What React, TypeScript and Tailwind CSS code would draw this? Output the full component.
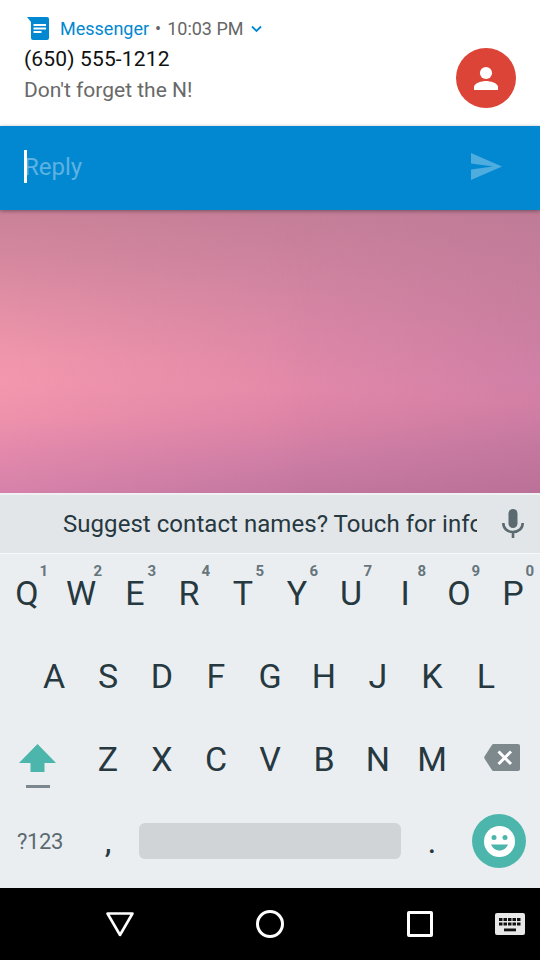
import React from "react";

const topRow = ["Q", "W", "E", "R", "T", "Y", "U", "I", "O", "P"];
const homeRow = ["A", "S", "D", "F", "G", "H", "J", "K", "L"];
const bottomRow = ["Z", "X", "C", "V", "B", "N", "M"];

function Key({ label, hint }: { label: string; hint?: string }) {
  return (
    <div className="relative flex h-[82px] w-[54px] shrink-0 items-center justify-center pb-[2px] text-[34px] leading-[40px] text-[#263840]">
      {label}
      {hint && (
        <span className="absolute top-[9px] right-[6px] text-[15px] leading-[18px] font-bold text-[#66757b]">
          {hint}
        </span>
      )}
    </div>
  );
}

function Notification() {
  return (
    <header className="flex h-[126px] justify-between bg-white pr-6 pl-6">
      <div className="flex flex-col pt-[15px]">
        <div className="flex h-[26px] items-center text-[18px] whitespace-nowrap">
          <svg className="ml-[3px] h-[23px] w-[22px]" viewBox="0 0 22 23">
            <path d="M0 0h20a2 2 0 0 1 2 2v19a2 2 0 0 1-2 2H6a2 2 0 0 1-2-2V5z" fill="#0288d1" />
            <path d="M6.500 8h12.500M6.500 11.500h12.500M6.500 15h8" stroke="#fff" strokeWidth="2" />
          </svg>
          <span className="ml-[11px] text-[#0288d1]">Messenger</span>
          <span className="ml-[6px] text-[#666]">•</span>
          <span className="ml-[6px] text-[#666]">10:03 PM</span>
          <svg className="mt-px ml-[7px] h-[8px] w-[11px]" viewBox="0 0 11 8">
            <path d="M1 1.500l4.500 4.500L10 1.500" fill="none" stroke="#0288d1" strokeWidth="1.800" />
          </svg>
        </div>
        <div className="mt-[4px] h-[28px] text-[21px] leading-[28px] tracking-[0.15px] whitespace-nowrap text-[#111]">
          (650) 555-1212
        </div>
        <div className="mt-[3px] h-[28px] text-[21px] leading-[28px] whitespace-nowrap text-[#696969]">Don't forget the N!</div>
      </div>
      <div className="mt-[48px] flex h-[60px] w-[60px] items-center justify-center rounded-full bg-[#db4437]">
        <svg className="h-6 w-6" viewBox="0 0 24 24" fill="#fff">
          <circle cx="12" cy="7" r="6.100" />
          <path d="M0 24v-3c0-4 8-6 12-6s12 2 12 6v3z" />
        </svg>
      </div>
    </header>
  );
}

function ReplyBar() {
  return (
    <div className="z-10 flex h-[84px] items-center justify-between bg-[#0288d1] pr-[38px] pl-6 shadow-[0_1px_4px_rgba(0,0,0,0.4)]">
      <div className="-mt-[3px] flex items-center">
        <span className="z-10 h-[33px] w-[3px] bg-white" />
        <span className="-ml-[3px] text-[24px] leading-[30px] text-[#5db2e1]">Reply</span>
      </div>
      <svg className="-mt-[3px] h-[27px] w-[31px]" viewBox="0 0 31 27" fill="#4eacdf">
        <path d="M0 0l31 13.500L0 27V16.500l22-3-22-3z" />
      </svg>
    </div>
  );
}

function Wallpaper() {
  return (
    <div className="grid h-[283px]">
      <div className="[grid-area:1/1] bg-[linear-gradient(to_bottom,#bf7c97_0%,#c87e9d_30%,#d180a7_60%,#d37fa5_68%,#c4789f_84%,#bb7198_100%)]" />
      <div className="[grid-area:1/1] bg-[linear-gradient(to_bottom,#c47e98_0%,#d084a0_24%,#dc87a6_45%,#e489a9_63%,#dc83a6_76%,#cd7da5_89%,#c2779f_100%)] [mask-image:linear-gradient(to_right,black_50%,transparent)]" />
      <div className="[grid-area:1/1] bg-[linear-gradient(to_bottom,#c98298_0%,#d5889f_18%,#e490a6_36%,#f096ab_52%,#f297ad_61%,#ee92ac_73%,#e389ab_85%,#d682aa_100%)] [mask-image:linear-gradient(to_right,black,transparent_58%)]" />
    </div>
  );
}

function Keyboard() {
  return (
    <section className="flex h-[395px] flex-col bg-[#ebeef1]">
      <div className="flex h-[61px] items-center justify-between border-t-2 border-b border-t-[#eff2f3] border-b-[#f7f9fa] bg-[#e2e6e9] pr-[16px] pl-[63px]">
        <div className="w-[414px] overflow-hidden text-[24px] leading-[32px] tracking-[0.05px] whitespace-nowrap text-[#263840]">
          Suggest contact names? Touch for info
        </div>
        <svg className="h-[30px] w-[22px]" viewBox="0 0 22 30">
          <rect x="6.500" y="0" width="9" height="19" rx="4.500" fill="#5b6a71" />
          <path d="M1.300 14c0 5.500 4 9 9.700 9s9.700-3.500 9.700-9M11 23v6" fill="none" stroke="#5b6a71" strokeWidth="2.600" />
        </svg>
      </div>
      <div className="-mt-px flex h-[83px]">
        {topRow.map((k, i) => (
          <Key key={k} label={k} hint={String((i + 1) % 10)} />
        ))}
      </div>
      <div className="flex h-[83px] justify-center">
        {homeRow.map((k) => (
          <Key key={k} label={k} />
        ))}
      </div>
      <div className="flex h-[82px]">
        <div className="flex w-[81px] flex-col items-start pt-[25px]">
          <svg className="ml-[19px] h-[28px] w-[37px]" viewBox="0 0 37 28">
            <path d="M18.500 0L37 19H25.500v9h-14v-9H0z" fill="#4db6ac" />
          </svg>
          <span className="mt-[13px] ml-[26px] h-[3px] w-[24px] bg-[#7b888d]" />
        </div>
        {bottomRow.map((k) => (
          <Key key={k} label={k} />
        ))}
        <svg className="mt-[25px] ml-[25px] h-[28px] w-[36px]" viewBox="0 0 36 28">
          <path d="M9.500 0H34a2 2 0 0 1 2 2v23a2 2 0 0 1-2 2H9.500q-1 0-1.600-.9L.5 14.500q-.5-1 0-2L7.900.9Q8.500 0 9.500 0z" fill="#7d898d" />
          <path d="M14.500 7.500l12.500 12.500M27 7.500L14.500 20" stroke="#fff" strokeWidth="3" />
        </svg>
      </div>
      <div className="flex h-[87px] items-start">
        <div className="mt-[27px] w-[81px] pl-[17px] text-[22px] leading-[28px] tracking-[-0.4px] text-[#5b6a71]">?123</div>
        <div className="mt-[20px] w-[54px] text-center text-[34px] leading-[40px] text-[#263840]">,</div>
        <div className="mt-[22px] ml-[4px] h-[36px] w-[262px] rounded-[6px] bg-[#d0d4d7]" />
        <div className="mt-[20px] ml-[4px] w-[54px] text-center text-[34px] leading-[40px] text-[#263840]">.</div>
        <div className="mt-[13px] ml-[13px] flex h-[54px] w-[54px] items-center justify-center rounded-full bg-[#4db6ac]">
          <svg className="h-[31px] w-[31px]" viewBox="0 0 31 31">
            <circle cx="15.500" cy="15.500" r="15.500" fill="#fff" />
            <circle cx="10" cy="11.500" r="2.500" fill="#4db6ac" />
            <circle cx="21" cy="11.500" r="2.500" fill="#4db6ac" />
            <path d="M7 18.500h17c-1.500 3.800-4.700 6-8.500 6S8.500 22.300 7 18.500z" fill="#4db6ac" />
          </svg>
        </div>
      </div>
    </section>
  );
}

function NavBar() {
  return (
    <nav className="flex h-[72px] items-center bg-black">
      <svg className="ml-[106px] h-[26px] w-[28px]" viewBox="0 0 28 26">
        <path d="M1.500 2.500h25L14 24z" fill="none" stroke="#fff" strokeWidth="2.600" strokeLinejoin="round" />
      </svg>
      <span className="ml-[122px] h-7 w-7 rounded-full border-[3px] border-white" />
      <span className="ml-[123px] h-[26px] w-[26px] rounded-[2px] border-[3px] border-white" />
      <svg className="ml-[62px] h-[22px] w-[30px]" viewBox="0 0 30 22">
        <rect width="30" height="22" rx="2" fill="#e8e8e8" />
        {[4, 8.5, 13, 17.5, 22].map((x) => (
          <g key={x}>
            <rect x={x} y="5" width="3.500" height="3" fill="#111" />
            <rect x={x} y="9.500" width="3.500" height="3" fill="#111" />
          </g>
        ))}
        <rect x="9" y="15.500" width="12" height="2.800" fill="#111" />
      </svg>
    </nav>
  );
}

export default function App() {
  return (
    <main className="flex h-[960px] w-[540px] flex-col overflow-hidden bg-white font-[Roboto,sans-serif]">
      <Notification />
      <ReplyBar />
      <Wallpaper />
      <Keyboard />
      <NavBar />
    </main>
  );
}
